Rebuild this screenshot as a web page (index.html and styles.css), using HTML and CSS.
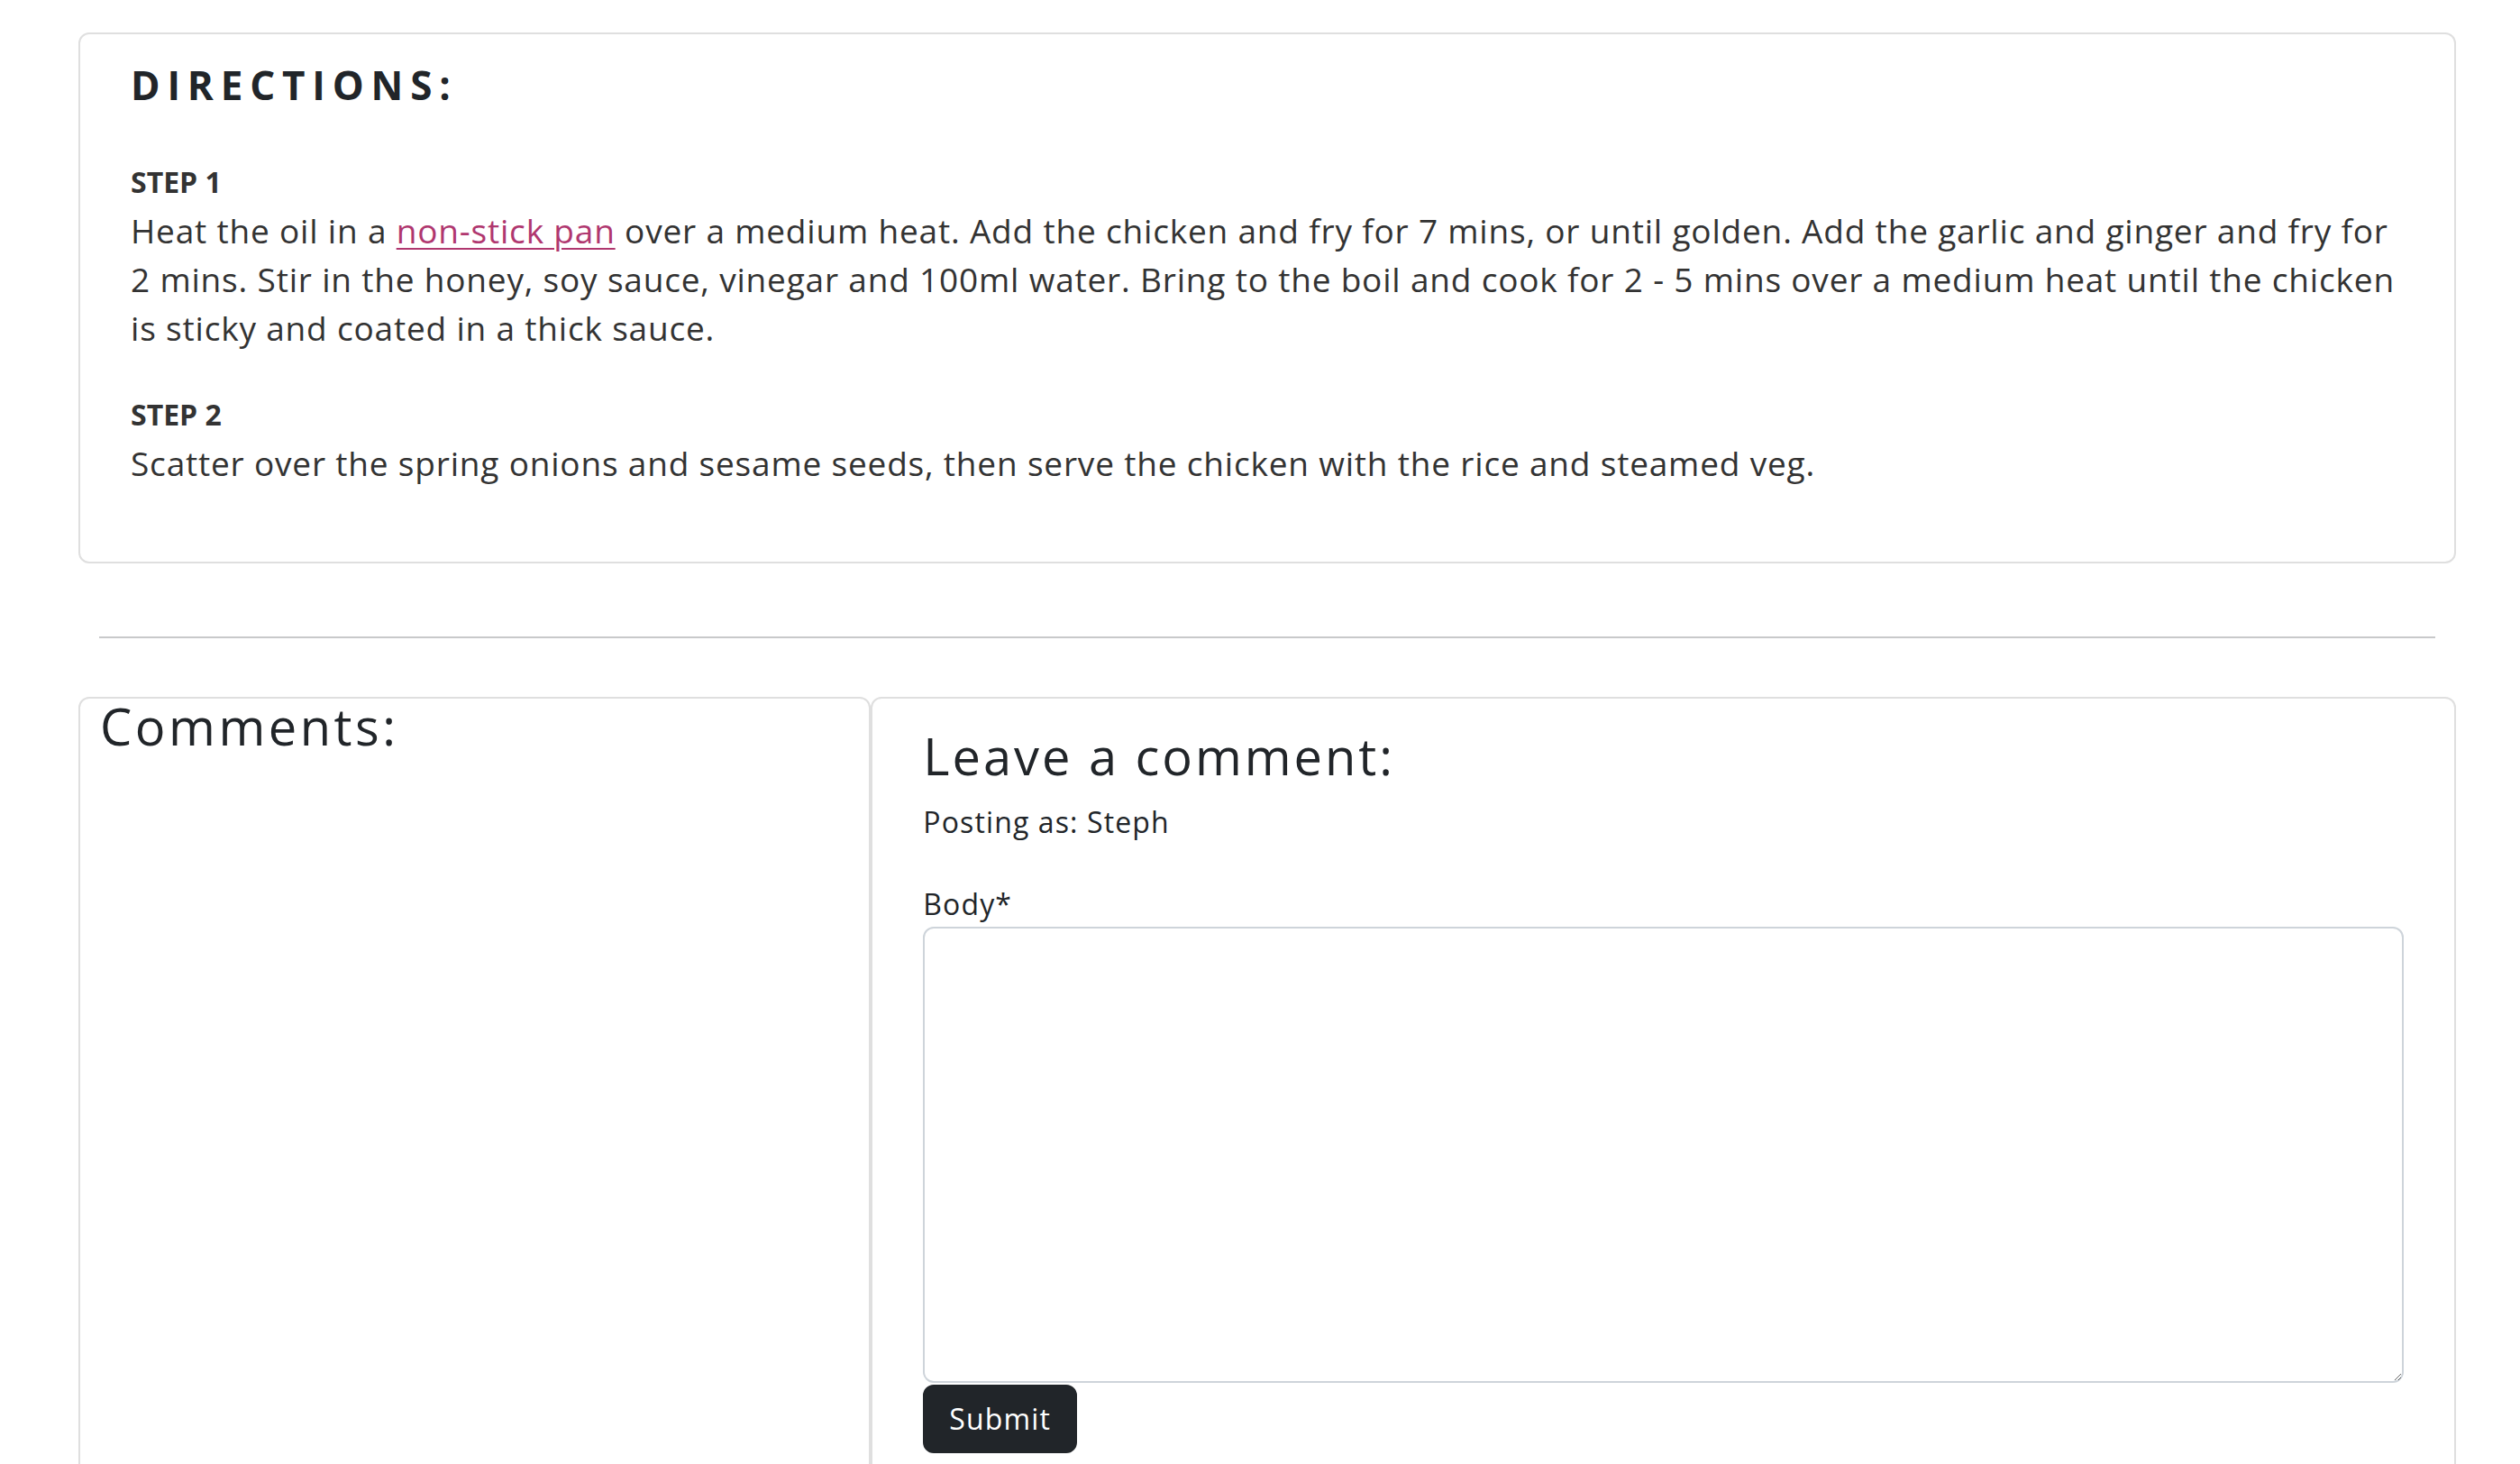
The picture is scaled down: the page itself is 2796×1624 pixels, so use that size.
FILE: index.html
```html
<!DOCTYPE html>
<html lang="en">
<head>
<meta charset="utf-8">
<title>Recipe – Directions and comments</title>
<link rel="stylesheet" href="styles.css">
</head>
<body>
<main class="page">
  <section class="card directions">
    <h3 class="directions-title">DIRECTIONS:</h3>
    <p class="step"><strong class="step-label">STEP 1</strong><br>Heat the oil in a <a href="#" class="step-link">non-stick pan</a> over a medium heat. Add the chicken and fry for 7 mins, or until golden. Add the garlic and ginger and fry for 2 mins. Stir in the honey, soy sauce, vinegar and 100ml water. Bring to the boil and cook for 2 - 5 mins over a medium heat until the chicken is sticky and coated in a thick sauce.</p>
    <p class="step"><strong class="step-label">STEP 2</strong><br>Scatter over the spring onions and sesame seeds, then serve the chicken with the rice and steamed veg.</p>
  </section>

  <hr class="divider">

  <div class="comments-row">
    <section class="card comments-list">
      <h3 class="section-title">Comments:</h3>
    </section>
    <section class="card comment-form">
      <h3 class="section-title form-title">Leave a comment:</h3>
      <p class="posting-as">Posting as: Steph</p>
      <form class="form" onsubmit="return false;">
        <label class="form-label" for="id_body">Body*</label>
        <textarea class="form-textarea" id="id_body" name="body"></textarea>
        <button type="submit" class="btn-submit">Submit</button>
      </form>
    </section>
  </div>
</main>
</body>
</html>
```

FILE: styles.css
```css
html, body {
  margin: 0;
  padding: 0;
  background: #ffffff;
}

body {
  font-family: "Open Sans", "Liberation Sans", sans-serif;
  color: #212529;
}

.page {
  width: 2638px;
  margin-left: 87px;
  padding-top: 36px;
  padding-bottom: 200px;
}

.card {
  box-sizing: border-box;
  border: 2px solid #dfdfdf;
  border-radius: 12px;
  background: #ffffff;
}

/* Directions card */
.directions {
  padding: 30px 56px 42px;
}

.directions-title {
  margin: 0 0 52px;
  font-size: 44px;
  line-height: 52.8px;
  font-weight: 700;
  letter-spacing: 0.178em;
  color: #212529;
}

.step {
  margin: 0 0 40px;
  font-size: 37px;
  line-height: 54px;
  letter-spacing: 0.022em;
  color: #333333;
}

.step-label {
  font-size: 32px;
  font-weight: 700;
  letter-spacing: 0;
}

.step-link {
  color: #b0376f;
  text-decoration: underline;
  text-underline-offset: 5px;
  text-decoration-thickness: 2px;
}

/* Divider */
.divider {
  margin: 81px 23px 65px;
  border: 0;
  border-top: 2px solid #c8c9ca;
  height: 0;
}

/* Comments row */
.comments-row {
  display: grid;
  grid-template-columns: 1fr 2fr;
}

.comments-list {
  padding: 0 22px;
  min-height: 1100px;
}

.section-title {
  margin: 0;
  font-size: 56px;
  line-height: 60px;
  font-weight: 500;
  letter-spacing: 0.063em;
  color: #212529;
}

.comment-form {
  padding: 30px 56px 60px;
  min-height: 1100px;
}

.form-title {
  line-height: 67.2px;
  margin-bottom: 16px;
  letter-spacing: 0.053em;
}

.posting-as {
  margin: 0 0 43px;
  font-size: 32px;
  line-height: 48px;
  letter-spacing: 0.035em;
}

.form {
  display: flex;
  flex-direction: column;
  align-items: flex-start;
}

.form-label {
  display: block;
  margin-bottom: 1px;
  font-size: 32px;
  line-height: 48px;
  letter-spacing: 0.035em;
}

.form-textarea {
  display: block;
  box-sizing: border-box;
  width: 100%;
  height: 506px;
  margin: 0;
  padding: 12px 24px;
  border: 2px solid #ced4da;
  border-radius: 12px;
  font-family: inherit;
  font-size: 32px;
  line-height: 48px;
  color: #212529;
  background: #ffffff;
  resize: vertical;
}

.btn-submit {
  margin-top: 2px;
  padding: 12px 27px;
  border: 2px solid #212529;
  border-radius: 12px;
  background: #212529;
  color: #ffffff;
  font-family: inherit;
  font-size: 32px;
  line-height: 48px;
  letter-spacing: 0.035em;
  cursor: pointer;
}
```
